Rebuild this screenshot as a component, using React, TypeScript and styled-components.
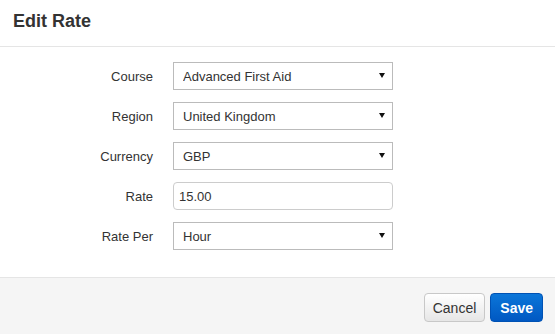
import styled, { createGlobalStyle } from "styled-components";

const GlobalStyle = createGlobalStyle`
  html, body {
    margin: 0;
    padding: 0;
    background: #fff;
  }
  body {
    font-family: "Liberation Sans", Arial, sans-serif;
    color: #333;
  }
`;

type Field =
  | { kind: "select"; label: string; value: string; options: string[] }
  | { kind: "input"; label: string; value: string };

const fields: Field[] = [
  {
    kind: "select",
    label: "Course",
    value: "Advanced First Aid",
    options: ["Advanced First Aid", "Basic First Aid", "Fire Safety"],
  },
  {
    kind: "select",
    label: "Region",
    value: "United Kingdom",
    options: ["United Kingdom", "Ireland", "United States"],
  },
  {
    kind: "select",
    label: "Currency",
    value: "GBP",
    options: ["GBP", "EUR", "USD"],
  },
  { kind: "input", label: "Rate", value: "15.00" },
  {
    kind: "select",
    label: "Rate Per",
    value: "Hour",
    options: ["Hour", "Day", "Course"],
  },
];

export default function App() {
  return (
    <>
      <GlobalStyle />
      <Modal>
        <Header>
          <Title>Edit Rate</Title>
        </Header>
        <Body>
          <Form onSubmit={(e) => e.preventDefault()}>
            {fields.map((f) => (
              <Row key={f.label}>
                <Label>{f.label}</Label>
                {f.kind === "select" ? (
                  <SelectWrap>
                    <Select defaultValue={f.value}>
                      {f.options.map((o) => (
                        <option key={o} value={o}>
                          {o}
                        </option>
                      ))}
                    </Select>
                  </SelectWrap>
                ) : (
                  <Input type="text" defaultValue={f.value} />
                )}
              </Row>
            ))}
          </Form>
        </Body>
        <Footer>
          <Button type="button">Cancel</Button>
          <Button type="button" primary>
            Save
          </Button>
        </Footer>
      </Modal>
    </>
  );
}

const Modal = styled.div`
  width: 555px;
  height: 334px;
  display: flex;
  flex-direction: column;
  background: #fff;
  overflow: hidden;
`;

const Header = styled.div`
  padding: 11px 13px 15px;
  border-bottom: 1px solid #e5e5e5;
`;

const Title = styled.h4`
  margin: 0;
  font-size: 18px;
  line-height: 20px;
  font-weight: bold;
  color: #333;
`;

const Body = styled.div`
  padding: 15px 0 27px;
  border-bottom: 1px solid #e5e5e5;
`;

const Form = styled.form`
  display: grid;
  grid-template-columns: 153px 220px;
  column-gap: 20px;
  row-gap: 12px;
`;

const Row = styled.div`
  display: contents;
`;

const Label = styled.label`
  justify-self: end;
  align-self: center;
  font-size: 13px;
  color: #333;
`;

const SelectWrap = styled.div`
  position: relative;
  height: 28px;

  &::after {
    content: "";
    position: absolute;
    right: 8px;
    top: 11px;
    width: 0;
    height: 0;
    border-left: 3px solid transparent;
    border-right: 3px solid transparent;
    border-top: 5px solid #111;
    pointer-events: none;
  }
`;

const Select = styled.select`
  appearance: none;
  -webkit-appearance: none;
  box-sizing: border-box;
  width: 100%;
  height: 28px;
  margin: 0;
  padding: 0 20px 0 9px;
  border: 1px solid #bbb;
  border-radius: 0;
  background: #fff;
  font-family: "Liberation Sans", Arial, sans-serif;
  font-size: 13px;
  color: #333;
  outline: none;
`;

const Input = styled.input`
  box-sizing: border-box;
  width: 100%;
  height: 28px;
  margin: 0;
  padding: 0 5px;
  border: 1px solid #ccc;
  border-radius: 4px;
  background: #fff;
  font-family: "Liberation Sans", Arial, sans-serif;
  font-size: 13px;
  color: #333;
  outline: none;
`;

const Footer = styled.div`
  flex: 1;
  display: flex;
  justify-content: flex-end;
  align-items: flex-start;
  gap: 5px;
  padding: 15px 12px 0;
  background: #f5f5f5;
`;

interface ButtonProps {
  primary?: boolean;
}

const Button = styled.button<ButtonProps>`
  height: 29px;
  padding: ${({ primary }) => (primary ? "0 9px" : "0 8px")};
  border-radius: 4px;
  font-family: "Liberation Sans", Arial, sans-serif;
  font-size: 14px;
  font-weight: ${({ primary }) => (primary ? "bold" : "normal")};
  cursor: pointer;
  border: 1px solid ${({ primary }) => (primary ? "#0052b4" : "#c8c8c8")};
  color: ${({ primary }) => (primary ? "#fff" : "#333")};
  background: ${({ primary }) =>
    primary
      ? "linear-gradient(to bottom, #0b76d9 0%, #0058c2 100%)"
      : "linear-gradient(to bottom, #ffffff 0%, #e6e6e6 100%)"};
`;
